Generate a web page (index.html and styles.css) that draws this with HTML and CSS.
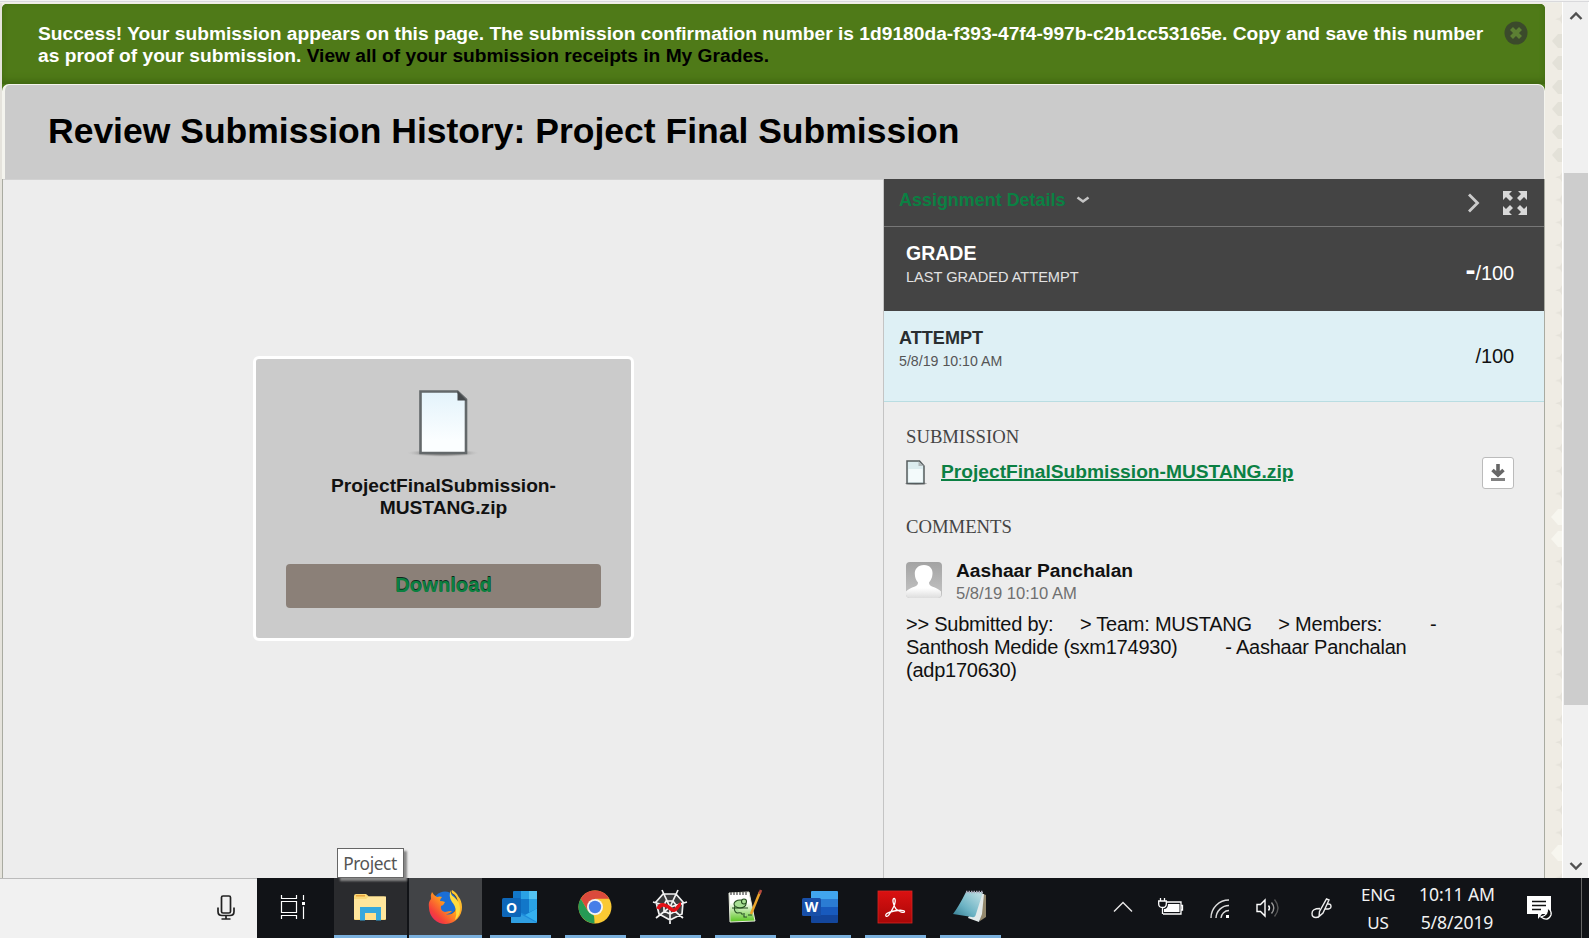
FILE: index.html
```html
<!DOCTYPE html>
<html lang="en">
<head>
<meta charset="utf-8">
<title>Review Submission History</title>
<link rel="stylesheet" href="styles.css">
</head>
<body>
<div class="viewport">
  <div class="edge"></div>
  <main class="page">
    <div class="banner">
      <p class="banner-text">Success! Your submission appears on this page. The submission confirmation number is 1d9180da-f393-47f4-997b-c2b1cc53165e. Copy and save this number<br>as proof of your submission. <a class="banner-link">View all of your submission receipts in My Grades.</a></p>
      <svg class="banner-close" width="24" height="24" viewBox="0 0 24 24"><circle cx="12" cy="12" r="11.5" fill="#3b4a2b"/><path d="M7.500 7.500l9 9M16.500 7.500l-9 9" stroke="#5c8033" stroke-width="4.200"/></svg>
    </div>
    <header class="title-bar"><h1 class="title">Review Submission History: Project Final Submission</h1></header>
    <div class="content">
      <section class="preview">
        <div class="card">
          <svg class="card-icon" width="70" height="72" viewBox="0 0 70 72">
            <defs>
              <linearGradient id="sheet" x1="0" y1="0" x2="0" y2="1"><stop offset="0" stop-color="#e3f3fb"/><stop offset=".8" stop-color="#fbfeff"/></linearGradient>
              <radialGradient id="shade"><stop offset="0" stop-color="#555"/><stop offset=".6" stop-color="#888" stop-opacity=".7"/><stop offset="1" stop-color="#bbb" stop-opacity="0"/></radialGradient>
            </defs>
            <ellipse cx="34" cy="65" rx="36" ry="4" fill="url(#shade)"/>
            <path d="M11.500 3.500h37l8.500 8v53.500h-45.500z" fill="url(#sheet)" stroke="#63686a" stroke-width="2.600"/>
            <path d="M48.500 3v9.500h9z" fill="#45494b"/>
          </svg>
          <div class="card-name">ProjectFinalSubmission-<br>MUSTANG.zip</div>
          <a class="card-button">Download</a>
        </div>
      </section>
      <aside class="sidebar">
        <div class="details-head">
          <span class="details-label">Assignment Details</span>
          <svg class="details-caret" width="14" height="8" viewBox="0 0 14 8"><path d="M1.500 1.500L7 5.500l5.500-4" fill="none" stroke="#c4c4c4" stroke-width="2.600"/></svg>
          <svg class="details-next" width="13" height="20" viewBox="0 0 13 20"><path d="M2 1.500l8.500 8.500L2 18.500" fill="none" stroke="#ccc" stroke-width="2.800"/></svg>
          <svg class="details-expand" width="24" height="24" viewBox="0 0 24 24" fill="#d8d8d8"><path d="M0 0h9L6 3l4 4-3 3-4-4-3 3zM24 0v9l-3-3-4 4-3-3 4-4-3-3zM0 24v-9l3 3 4-4 3 3-4 4 3 3zM24 24h-9l3-3-4-4 3-3 4 4 3-3z"/></svg>
        </div>
        <div class="grade">
          <div class="grade-info"><div class="grade-label">GRADE</div><div class="grade-sub">LAST GRADED ATTEMPT</div></div>
          <div class="score"><b class="score-dash">-</b>/100</div>
        </div>
        <div class="attempt">
          <div class="attempt-info"><div class="attempt-label">ATTEMPT</div><div class="attempt-date">5/8/19 10:10 AM</div></div>
          <div class="score">/100</div>
        </div>
        <div class="details">
          <h2 class="section-title">SUBMISSION</h2>
          <div class="file">
            <svg class="file-icon" width="22" height="25" viewBox="0 0 22 25"><ellipse cx="10" cy="23.500" rx="11" ry="1.500" fill="#aaa"/><path d="M1 1h12.500l4.500 5v17.500H1z" fill="#dcecef" stroke="#555c5e" stroke-width="1.500"/><path d="M2.500 9h14v13h-14z" fill="#f3fafb"/><path d="M12.500 1.500V6H18z" fill="#aeb6b8"/></svg>
            <a class="file-link">ProjectFinalSubmission-MUSTANG.zip</a>
            <span class="file-download"><svg width="14" height="18" viewBox="0 0 14 18"><path d="M7 0v10M1.500 6L7 11l5.500-5" fill="none" stroke="#666" stroke-width="3.600"/><path d="M0 14h14v3H0z" fill="#808080"/></svg></span>
          </div>
          <h2 class="section-title">COMMENTS</h2>
          <div class="author">
            <svg class="avatar" width="36" height="36" viewBox="0 0 36 36"><defs><linearGradient id="av" x1="0" y1="0" x2="0" y2="1"><stop offset="0" stop-color="#a3a3a3"/><stop offset="1" stop-color="#c5c5c5"/></linearGradient><linearGradient id="person" x1="0" y1="0" x2="0" y2="1"><stop offset=".7" stop-color="#fff"/><stop offset="1" stop-color="#ddd"/></linearGradient></defs><rect width="36" height="36" rx="4" fill="url(#av)"/><path d="M18 3c6 0 9 4 8.500 9-.3 4-1.500 6-3.500 8.500 0 2 1 3 3 4 4 1.500 7 2.500 9 5V34q-1 2-3 2H4q-3 0-4-3v-3.500c2-2.500 5-3.500 9-5 2-1 3-2 3-4C10 18 9 16 8.800 12 8.500 7 12 3 18 3z" fill="url(#person)"/></svg>
            <div><div class="author-name">Aashaar Panchalan</div><div class="author-date">5/8/19 10:10 AM</div></div>
          </div>
          <p class="comment">&gt;&gt; Submitted by:&nbsp;&nbsp;&nbsp;&nbsp; &gt; Team: MUSTANG&nbsp;&nbsp;&nbsp;&nbsp; &gt; Members:&nbsp;&nbsp;&nbsp;&nbsp;&nbsp;&nbsp;&nbsp;&nbsp; -<br>Santhosh Medide (sxm174930)&nbsp;&nbsp;&nbsp;&nbsp;&nbsp;&nbsp;&nbsp;&nbsp; - Aashaar Panchalan<br>(adp170630)</p>
        </div>
      </aside>
    </div>
  </main>
  <div class="backdrop">
    <svg width="17" height="875" viewBox="0 0 17 875">
      <defs><pattern id="stars" width="17" height="22.600" patternUnits="userSpaceOnUse" patternTransform="translate(0 5)"><path d="M17 6l-2 3.500-5 1.500 5 1.500 2 3.500z" fill="#e5e2da"/></pattern></defs>
      <rect width="17" height="875" fill="url(#stars)"/>
      <path d="M17 31l-4 0-6 7 6 7h4zM17 53h-4l-6 7 6 7h4zM17 77h-4l-6 7 6 7h4zM17 99h-4l-6 7 6 7h4zM17 122h-4l-6 7 6 7h4zM17 145h-4l-6 7 6 7h4z" fill="#e3e1d8"/>
      <path d="M17 506h-4l-7 8 7 8h4zM17 528h-4l-7 8 7 8h4zM17 842h-4l-7 8 7 8h4z" fill="#f7f6ef"/>
    </svg>
  </div>
  <div class="scrollbar">
    <svg class="scroll-up" width="14" height="10" viewBox="0 0 14 10"><path d="M1.500 8L7 2.500 12.500 8" fill="none" stroke="#505050" stroke-width="2.400"/></svg>
    <div class="scroll-thumb"></div>
    <svg class="scroll-down" width="14" height="10" viewBox="0 0 14 10"><path d="M1.500 2L7 7.500 12.500 2" fill="none" stroke="#505050" stroke-width="2.400"/></svg>
  </div>
  <div class="tooltip">Project</div>
</div>
<footer class="taskbar">
  <div class="search"><svg width="18" height="26" viewBox="0 0 18 26" fill="none" stroke="#222" stroke-width="1.700"><rect x="4.500" y="1" width="9" height="17" rx="1.500"/><path d="M1 12.500v4q0 4 4 4h8q4 0 4-4v-4M9 20.500v3.500M4.500 24h9"/></svg></div>
  <div class="taskview"><svg width="26" height="24" viewBox="0 0 26 24" fill="none" stroke="#fff" stroke-width="1.200"><path d="M1.500 0v3.500h15V0M1.500 24v-3.500h15V24M1.500 6.500h15v11h-15zM23.500 0v5M23.500 11.500V24"/><path d="M22 7h3v3h-3z" fill="#fff" stroke="none"/></svg></div>
  <div class="app app-hover"><svg width="34" height="28" viewBox="0 0 34 28"><path d="M1 3q0-2 2-2h10l3 2.500h15q2 0 2 2V26q0 1-1 1H2q-1 0-1-1z" fill="#fbd978"/><path d="M1 6h12l3-2.500h17V26H1z" fill="#ffe69c"/><path d="M3 2h9v1.500H3z" fill="#e8a33d"/><path d="M7 14h21v13.500h-5V20H12v7.500H7z" fill="#35a8dc"/><path d="M12 20h11v7H12z" fill="#ffe08a"/></svg></div>
  <div class="app app-active"><svg width="36" height="36" viewBox="0 0 36 36"><defs><linearGradient id="fox" x1="1" y1="0" x2="0" y2="1"><stop offset="0" stop-color="#ffe23b"/><stop offset=".45" stop-color="#ff9a1f"/><stop offset=".75" stop-color="#f6413a"/><stop offset="1" stop-color="#e3187a"/></linearGradient></defs><circle cx="18" cy="14.500" r="12" fill="#1b6fd6"/><path d="M5 3q2 4 5 5 3-1 5 0-2 2-2 4 3 0 5 1-1 3-4 4-1 5 4 6 4-1 7-1-3 4-7 3 6 2 10-3 3-5-1-11 3 2 4 4 0-8-6-11-1-2 0-3 5 3 6 6 4 5 4 11a16 16 0 0 1-33 1Q1 13 4 10 3 6 5 3z" fill="url(#fox)"/><path d="M24 1q-1 5 3 7 6 5 6 12 0 7-5 11 2-5 1-9-1-6-4-9-4-6-1-12z" fill="#ffdc3e"/></svg></div>
  <div class="app"><svg width="36" height="34" viewBox="0 0 36 34"><path d="M11 2q0-1 1-1h22q1 0 1 1v16H11z" fill="#1277c9"/><path d="M19 1h8v8h-8zM27 9h8v9h-8z" fill="#2aa2e4"/><path d="M27 1h8v8h-8z" fill="#53c4f3"/><path d="M9 17h26v15q0 1-1 1H10q-1 0-1-1z" fill="#1c8bdb"/><path d="M11 14h24v5l-11 6-13-6z" fill="#1277c9"/><path d="M27 14h8v4.500l-8 4z" fill="#2aa2e4"/><path d="M9 19l26 14H10q-1 0-1-1z" fill="#2f9fe2"/><path d="M35 18.500L23 25l12 7z" fill="#35b0ee"/><rect y="8" width="19" height="19" rx="1.500" fill="#0d66b8"/><text x="9.500" y="22.500" class="app-letter">O</text></svg></div>
  <div class="app"><svg width="34" height="34" viewBox="0 0 34 34"><circle cx="17" cy="17" r="16.500" fill="#fac933"/><path d="M2.700 8.700A16.500 16.500 0 0 1 31.300 8.700H17L10 21z" fill="#db4a3c"/><path d="M2.700 8.700L9.900 21 17 25l-.5 8.500A16.500 16.500 0 0 1 2.700 8.700z" fill="#269a55"/><path d="M17 33.500l7-12.500-7 2-4-1 3 4z" fill="#fac933"/><circle cx="17" cy="17" r="8" fill="#f4f4f4"/><circle cx="17" cy="17" r="6.200" fill="#477ee8"/></svg></div>
  <div class="app"><svg width="36" height="36" viewBox="0 0 36 36"><path d="M11 5h13l7 8-1 12-12 6-11-6-3-12z" fill="#393a3c"/><g fill="none" stroke="#f2f2f2" stroke-width="1.700"><path d="M11 5h13l7 8-1 12-12 6-11-6-3-12zM14 12h7l3 4v6l-6 3-6-3v-6zM10 1l8 17L26 1M1 13l17 5 17-5M4 29l14-11 13 11M18 18v17"/></g><path d="M6 20q2-5 6-4t7 4 6-1 4-4" fill="none" stroke="#e30f16" stroke-width="3.600"/></svg></div>
  <div class="app"><svg width="36" height="36" viewBox="0 0 36 36"><defs><linearGradient id="pad" x1="0" y1="0" x2="0" y2="1"><stop offset=".35" stop-color="#fff"/><stop offset="1" stop-color="#58c51d"/></linearGradient></defs><path d="M2 4l20-1 6 29-25 1z" fill="url(#pad)" stroke="#e6eadc"/><path d="M4 3v3M7 3v3M10 3v3M13 3v3M16 3v3M19 3v3" stroke="#555" stroke-width="1.300"/><g fill="#a7df94" stroke="#234d1e" stroke-width="1.100"><ellipse cx="13" cy="15" rx="6" ry="4"/><circle cx="17" cy="12.500" r="2.500"/><path d="M8 17q-2 5 2 7 6-1 5 2M5 19h16M17 24v4h3M21 26h4"/></g><path d="M33 3L24 25" stroke="#eba52b" stroke-width="2.500"/><path d="M34 1l-1.500 4" stroke="#b64a3f" stroke-width="2.500"/></svg></div>
  <div class="app"><svg width="36" height="34" viewBox="0 0 36 34"><path d="M9 2q0-1 1-1h25q1 0 1 1v7H9z" fill="#41a5ee"/><path d="M9 9h27v8H9z" fill="#2b7cd3"/><path d="M9 17h27v8H9z" fill="#185abd"/><path d="M9 25h27v7q0 1-1 1H10q-1 0-1-1z" fill="#13469c"/><rect y="8" width="19" height="18" rx="1.500" fill="#184fa8"/><text x="9.500" y="22" class="app-letter">W</text></svg></div>
  <div class="app"><svg width="34" height="34" viewBox="0 0 34 34"><defs><linearGradient id="pdf" x1="0" y1="0" x2="0" y2="1"><stop offset="0" stop-color="#db1111"/><stop offset="1" stop-color="#a80707"/></linearGradient></defs><rect y="1" width="34" height="32" fill="url(#pdf)" stroke="#d82522" stroke-width=".8"/><path d="M8 26c-1.500-2 3-4 8-5 6-1.200 11-1 10.500.8S20 21 18 19c-3-4-4-10.500-2-10.500s1.500 5-1 9.500c-3 6-5.500 9.500-7 8z" fill="none" stroke="#fff" stroke-width="1.300"/></svg></div>
  <div class="app"><svg width="36" height="34" viewBox="0 0 36 34"><defs><linearGradient id="note" x1="1" y1="0" x2="0" y2="1"><stop offset="0" stop-color="#c8e4e8"/><stop offset=".6" stop-color="#6cb3c4"/><stop offset="1" stop-color="#327a90"/></linearGradient></defs><path d="M29 3l5 2v22l-6 4z" fill="#93886d"/><path d="M27 4h5l-2 20-3 8-11-4z" fill="#e3eaea"/><path d="M14 2h17l-7 22q-1 4-4 3L1 24q6-8 13-22z" fill="url(#note)"/><path d="M14 2h17" stroke="#aab" stroke-width="2.500" stroke-dasharray="1.500 1"/></svg></div>
  <div class="tray">
    <svg class="tray-more" width="20" height="12" viewBox="0 0 20 12"><path d="M1 10.500L10 1.500l9 9" fill="none" stroke="#e8e8e8" stroke-width="1.400"/></svg>
    <svg class="tray-battery" width="26" height="18" viewBox="0 0 26 18" fill="none" stroke="#fff" stroke-width="1.300"><path d="M8.500 4H23v12H5M23 7.500h1.500v4.500H23"/><path d="M10 6h11.500v8H6v-3q4 0 4-5z" fill="#fff" stroke="none"/><path d="M2.500 0v3M6.500 0v3M.7 3h7.600v3q0 3.500-3.800 3.500T.7 6zM4.500 9.500V16"/></svg>
    <svg class="tray-wifi" width="20" height="20" viewBox="0 0 20 20" fill="none" stroke="#ddd" stroke-width="1.400"><path d="M1 19A18 18 0 0 1 19 1M6 19A13 13 0 0 1 19 6.500M11 19a8 8 0 0 1 8-7.500" /><path d="M16 16h3v3h-3z" fill="#fff" stroke="none"/></svg>
    <svg class="tray-sound" width="24" height="20" viewBox="0 0 24 20" fill="none" stroke="#fff" stroke-width="1.400"><path d="M1 6.500h3.500L9 2v16l-4.500-4.500H1zM12.500 7.500q2 2.500 0 5"/><path d="M15.500 4.500q4.500 5.500 0 11" stroke="#999"/><path d="M18.500 1.500q7 8.500 0 17" stroke="#555"/></svg>
    <svg class="tray-pen" width="21" height="21" viewBox="0 0 21 21" fill="none" stroke="#eee" stroke-width="1.400"><path d="M15.500 1l2.500 1-6 13-4 3.500.5-5zM9 10.500q-8 0-8 5 0 4 4 4 3 0 4-3M16.500 6q3.500-.5 3.500 2.500T14 11"/></svg>
    <div class="tray-text tray-lang">ENG<br>US</div>
    <div class="tray-text tray-clock">10:11 AM<br>5/8/2019</div>
    <svg class="tray-notes" width="26" height="26" viewBox="0 0 26 26"><path d="M0 1h24v18h-9l-4 5v-5H0z" fill="#fff"/><path d="M5 6.500h14M5 10.500h14M5 14.500h9" stroke="#111" stroke-width="1.300"/><path d="M20 13q2 7-6 9 7 5 10-2 1-5-4-7z" fill="#111" stroke="#fff" stroke-width="1.300"/></svg>
    <div class="show-desktop"></div>
  </div>
</footer>
</body>
</html>
```
FILE: styles.css
```css
* { box-sizing: border-box; }
body {
  margin: 0;
  width: 1589px;
  height: 938px;
  overflow: hidden;
  font-family: "Liberation Sans", Arial, sans-serif;
  background: #ededed;
  color: #111;
}
svg { display: block; flex: none; overflow: visible; }
h1, h2, p { margin: 0; font-weight: normal; }

.viewport {
  position: relative;
  display: flex;
  height: 878px;
  padding-top: 3px;
  background: linear-gradient(#f3f3f3 0 1px, #d9d9dc 1px 2px, #efefe9 2px 3px, #efece4 3px);
}
.edge { width: 2px; background: #e5e3dc; }
.page {
  display: flex;
  flex-direction: column;
  width: 1543px;
  margin-top: 1px;
  border-radius: 5px 5px 0 0;
  background: #4c7818;
}
.banner {
  display: flex;
  justify-content: space-between;
  height: 80px;
  padding: 19px 17px 0 36px;
  border-radius: 5px 5px 0 0;
  background: #4f7a18;
  box-shadow: inset 0 -6px 8px -4px #3e6411, inset 0 0 5px #456f14;
}
.banner-text {
  color: #fff;
  font-size: 19.21px;
  font-weight: bold;
  line-height: 22px;
  white-space: nowrap;
}
.banner-link { color: #000; }
.banner-close { margin-top: -2px; }
.title-bar {
  height: 95px;
  padding: 24px 0 0 43px;
  border: 1px solid #f4f4ee;
  border-width: 1px 1px 0 3px;
  border-radius: 7px 7px 0 0;
  background: #cbcbcb;
}
.title {
  color: #000;
  font-size: 35.5px;
  font-weight: bold;
  line-height: 44px;
  white-space: nowrap;
}
.content {
  display: flex;
  flex: 1;
  border: solid #a9aba1;
  border-width: 0 1px;
  background: #ededed;
}
.preview { width: 880px; padding: 177px 0 0 250px; box-shadow: inset 0 1px #d2d2d2; }
.card {
  display: flex;
  flex-direction: column;
  align-items: center;
  width: 381px;
  height: 285px;
  padding: 29px 30px 0;
  border: 3px solid #fff;
  border-radius: 6px;
  background: #cbcbcb;
}
.card-name {
  margin-top: 15px;
  font-size: 19.2px;
  font-weight: bold;
  line-height: 22px;
  text-align: center;
}
.card-button {
  width: 315px;
  height: 44px;
  margin-top: 45px;
  border-radius: 4px;
  background: #8b8078;
  color: #0b8040;
  font-size: 20.2px;
  font-weight: bold;
  line-height: 42px;
  text-align: center;
  text-shadow: 0 -1px 0 #11281c;
}

.sidebar { width: 661px; border-left: 1px solid #c4c4c4; }
.details-head {
  display: flex;
  align-items: flex-start;
  height: 48px;
  padding: 10px 17px 0 15px;
  border-bottom: 1px solid #777;
  background: #444;
}
.details-label { color: #0b8043; font-size: 17.95px; font-weight: bold; line-height: 22px; white-space: nowrap; }
.details-caret { margin: 7px auto 0 11px; }
.details-next { margin: 4px 23px 0 0; }
.details-expand { margin-top: 2px; }
.grade, .attempt { display: flex; justify-content: space-between; }
.grade { height: 84px; padding: 14px 30px 0 22px; background: #444; color: #fff; }
.grade-label { font-size: 19.5px; font-weight: bold; line-height: 24px; }
.grade-sub { margin-top: 2px; color: #e2e2e2; font-size: 14.6px; line-height: 20px; letter-spacing: -.02px; }
.score { padding-top: 18px; font-size: 20px; line-height: 24px; letter-spacing: -.1px; }
.grade .score { padding-top: 19px; }
.score-dash { font-size: 30px; line-height: 20px; }
.attempt { height: 91px; padding: 15px 30px 0 15px; border-bottom: 1px solid #b9dde2; background: #def0f5; }
.attempt-label { color: #292e30; font-size: 18.1px; font-weight: bold; line-height: 24px; }
.attempt-date { margin-top: 1px; color: #555; font-size: 14.2px; line-height: 21px; }
.details { padding: 23px 30px 0 22px; }
.section-title { color: #444; font-family: "Liberation Serif", Georgia, serif; font-size: 18.7px; line-height: 24px; }
.file { display: flex; align-items: flex-start; height: 66px; padding-top: 8px; }
.file-icon { margin-top: 3px; }
.file-link {
  margin: 3px auto 0 13px;
  color: #0b8043;
  font-size: 19.2px;
  font-weight: bold;
  line-height: 24px;
  text-decoration: underline;
  text-decoration-thickness: 2px;
}
.file-download {
  display: flex;
  justify-content: center;
  width: 32px;
  height: 32px;
  padding-top: 6px;
  border: 1px solid #bbb;
  border-radius: 3px;
  background: #fff;
}
.author { display: flex; gap: 14px; padding-top: 20px; }
.avatar { margin-top: 3px; }
.author-name { font-size: 19.2px; font-weight: bold; line-height: 23px; }
.author-date { color: #707070; font-size: 16.6px; line-height: 23px; }
.comment { margin-top: 8px; font-size: 20px; line-height: 23px; letter-spacing: -.24px; white-space: nowrap; }

.backdrop { width: 17px; overflow: hidden; }
.scrollbar {
  display: flex;
  flex-direction: column;
  align-items: center;
  width: 27px;
  margin-top: -1px;
  border: solid #fff;
  border-width: 0 1px;
  background: #f0f0f0;
}
.scroll-up { margin-top: 9px; }
.scroll-thumb { width: 24px; height: 532px; margin-top: 152px; background: #cdcdcd; }
.scroll-down { margin: auto 0 7px; }
.tooltip {
  position: absolute;
  left: 337px;
  top: 848px;
  width: 67px;
  height: 30px;
  padding-right: 1px;
  border: 1px solid #666;
  background: #fff;
  box-shadow: 3px 3px 2px #888;
  color: #555;
  font-family: "Noto Sans", sans-serif;
  font-size: 17.3px;
  line-height: 29px;
  letter-spacing: -.4px;
  text-align: center;
}

.taskbar { display: flex; height: 60px; background: #111317; }
.search {
  display: flex;
  justify-content: flex-end;
  width: 257px;
  padding: 16px 22px 0 0;
  border-top: 1px solid #bbb;
  background: #f1f1f1;
}
.taskview { width: 77px; padding: 17px 0 0 23px; }
.app {
  display: flex;
  align-items: center;
  justify-content: center;
  width: 61px;
  margin: 0 6px 0 8px;
  padding: 1px 2px 0 0;
  border-bottom: 3px solid #7ab0dd;
}
.app-hover { width: 73px; margin: 0 2px 0 0; background: #2a2b2e; }
.app-active { width: 73px; margin: 0; background: #424447; }
.app-letter { fill: #fff; font: bold 14px "Open Sans", sans-serif; text-anchor: middle; }
.tray { display: flex; flex: 1; align-items: flex-start; color: #f2f2f2; }
.tray-more { margin: 23px 0 0 106px; }
.tray-battery { margin: 20px 0 0 25px; }
.tray-wifi { margin: 21px 0 0 26px; }
.tray-sound { margin: 20px 0 0 26px; }
.tray-pen { margin: 20px 0 0 31px; }
.tray-text { font: 17px/27.500px "Noto Sans", sans-serif; text-align: center; white-space: nowrap; }
.tray-lang { width: 60px; margin: 3px 0 0 16px; letter-spacing: -.2px; }
.tray-clock { width: 90px; margin: 3px 0 0 4px; font-size: 17.6px; letter-spacing: -.1px; }
.tray-notes { margin: 17px 0 0 25px; }
.show-desktop { width: 1px; height: 60px; margin: 0 7px 0 auto; background: #666; }
```
